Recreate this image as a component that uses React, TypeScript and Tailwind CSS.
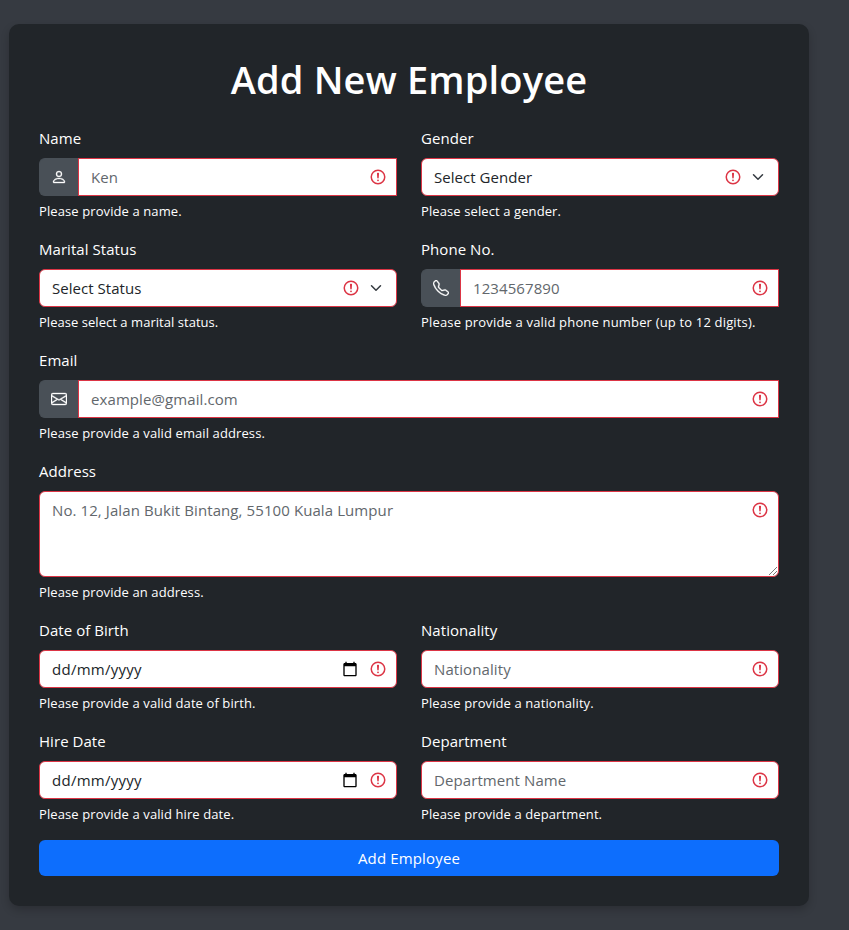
import type { ReactNode } from 'react';
import { BsEnvelope, BsPerson, BsTelephone } from 'react-icons/bs';

function ErrorIcon() {
  return (
    <svg viewBox="0 0 12 12" width="18" height="18" fill="none" stroke="#dc3545" className="shrink-0">
      <circle cx="6" cy="6" r="4.5" />
      <path strokeLinejoin="round" d="M5.8 3.6h.4L6 6.5z" />
      <circle cx="6" cy="8.2" r=".6" fill="#dc3545" stroke="none" />
    </svg>
  );
}

function Chevron() {
  return (
    <svg viewBox="0 0 16 16" width="16" height="12" fill="none" stroke="#343a40" className="shrink-0">
      <path strokeLinecap="round" strokeLinejoin="round" strokeWidth="2" d="m2 5 6 6 6-6" />
    </svg>
  );
}

function CalendarIcon() {
  return (
    <svg viewBox="0 0 24 24" width="16" height="16" fill="#000" className="shrink-0">
      <path d="M20 3h-1V1h-2v2H7V1H5v2H4c-1.1 0-2 .9-2 2v16c0 1.1.9 2 2 2h16c1.1 0 2-.9 2-2V5c0-1.1-.9-2-2-2zm0 18H4V8h16v13z" />
    </svg>
  );
}

function Grip() {
  return (
    <svg viewBox="0 0 10 10" width="10" height="10" stroke="#555" strokeWidth="0.8" className="absolute bottom-0 right-0">
      <path d="M1 9 9 1M5 9l4-4" />
    </svg>
  );
}

type FieldProps = {
  label: string;
  feedback: string;
  text: string;
  icon?: ReactNode;
  kind?: 'text' | 'select' | 'date' | 'area';
  feedbackTracking?: string;
};

function Field({ label, feedback, text, icon, kind = 'text', feedbackTracking = 'tracking-[0.1px]' }: FieldProps) {
  const dark = kind === 'select' || kind === 'date';
  const tracking = kind === 'date' ? 'tracking-[0.27px] ' : kind === 'select' ? 'tracking-[0.04px] ' : 'tracking-[0.09px] ';
  return (
    <div className="mb-4">
      <div className="mb-2 h-6 text-[15px] leading-6 tracking-[0.05px] text-white">{label}</div>
      <div className="flex">
        {icon && (
          <div className="flex h-[38px] w-[39px] items-center justify-center rounded-l-md border border-r-0 border-[#495057] bg-[#495057] text-base text-white">
            {icon}
          </div>
        )}
        <div
          className={
            'relative flex flex-1 border border-[#dc3545] bg-white pl-3 ' +
            (icon ? '' : 'rounded-md ') +
            (kind === 'area' ? 'h-[86px] items-start pt-[6px] ' : 'h-[38px] items-center ') +
            (kind === 'select' ? 'pr-3' : 'pr-[9px]')
          }
        >
          <span className={'flex-1 text-[15px] leading-6 ' + tracking + (dark ? 'text-[#212529]' : 'text-[#62676c]')}>
            {text}
          </span>
          {kind === 'date' && (
            <span className="mr-[11px]">
              <CalendarIcon />
            </span>
          )}
          <span className={kind === 'area' ? 'pt-[3px]' : ''}>
            <ErrorIcon />
          </span>
          {kind === 'select' && (
            <span className="ml-2">
              <Chevron />
            </span>
          )}
          {kind === 'area' && <Grip />}
        </div>
      </div>
      <div className={'mt-1 h-[21px] whitespace-nowrap text-[13px] leading-[23px] text-white ' + feedbackTracking}>
        {feedback}
      </div>
    </div>
  );
}

export default function App() {
  return (
    <div className="h-[930px] bg-[#363a41] pl-[9px] pt-6 font-['Open_Sans',sans-serif]">
      <div className="h-[882px] w-[800px] rounded-[10px] bg-[#212529] p-[30px] shadow-[0_4px_8px_rgba(0,0,0,0.2)]">
        <h1 className="mb-6 h-12 text-center text-[38px] font-semibold leading-[50px] tracking-[0.18px] text-white">
          Add New Employee
        </h1>
        <div className="grid grid-cols-2 gap-x-6">
          <Field label="Name" text="Ken" feedback="Please provide a name." icon={<BsPerson strokeWidth={0.35} />} />
          <Field label="Gender" text="Select Gender" feedback="Please select a gender." kind="select" />
          <Field
            label="Marital Status"
            text="Select Status"
            feedback="Please select a marital status."
            kind="select"
            feedbackTracking="tracking-[0.04px]"
          />
          <Field
            label="Phone No."
            text="1234567890"
            feedback="Please provide a valid phone number (up to 12 digits)."
            icon={<BsTelephone strokeWidth={0.35} />}
            feedbackTracking="tracking-[0.17px]"
          />
        </div>
        <Field
          label="Email"
          text="example@gmail.com"
          feedback="Please provide a valid email address."
          icon={<BsEnvelope strokeWidth={0.35} />}
        />
        <Field
          label="Address"
          text="No. 12, Jalan Bukit Bintang, 55100 Kuala Lumpur"
          feedback="Please provide an address."
          kind="area"
        />
        <div className="grid grid-cols-2 gap-x-6">
          <Field label="Date of Birth" text="dd/mm/yyyy" feedback="Please provide a valid date of birth." kind="date" />
          <Field label="Nationality" text="Nationality" feedback="Please provide a nationality." />
          <Field label="Hire Date" text="dd/mm/yyyy" feedback="Please provide a valid hire date." kind="date" />
          <Field label="Department" text="Department Name" feedback="Please provide a department." />
        </div>
        <button className="block h-9 w-full rounded-md bg-[#0d6efd] text-[15px] leading-6 tracking-[0.15px] text-white">
          Add Employee
        </button>
      </div>
    </div>
  );
}
